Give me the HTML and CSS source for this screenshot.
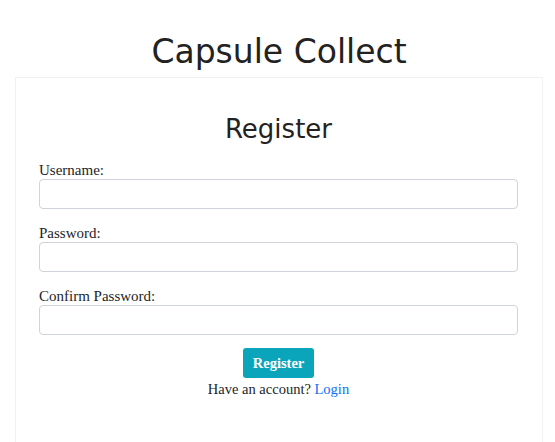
FILE: index.html
```html
<!DOCTYPE html>
<html>
<head>
<meta charset="utf-8">
<link rel="stylesheet" href="styles.css">
</head>
<body>
<div class="page">
  <h1 class="site-title">Capsule Collect</h1>
  <div class="card">
    <h2 class="card-title">Register</h2>
    <form class="form">
      <div class="field">
        <label class="label">Username:</label>
        <input class="input" type="text">
      </div>
      <div class="field">
        <label class="label">Password:</label>
        <input class="input" type="password">
      </div>
      <div class="field">
        <label class="label">Confirm Password:</label>
        <input class="input" type="password">
      </div>
      <div class="actions">
        <button class="btn" type="button">Register</button>
        <p class="switch">Have an account? <a class="link" href="#">Login</a></p>
      </div>
    </form>
  </div>
</div>
</body>
</html>
```
FILE: styles.css
```css
html, body {
  margin: 0;
  background: #ffffff;
}
body {
  font-family: "Liberation Serif", serif;
  color: #212529;
}
.page {
  padding: 0 12px 0 15px;
}
.site-title {
  font-family: "DejaVu Sans", sans-serif;
  font-weight: normal;
  font-size: 33px;
  line-height: 40px;
  text-align: center;
  margin: 32px 0 5px;
  color: #222;
}
.card {
  border: 1px solid #f1f1f1;
  padding: 33px 24px 40px 23px;
  min-height: 300px;
}
.card-title {
  font-family: "DejaVu Sans", sans-serif;
  font-weight: normal;
  font-size: 26px;
  line-height: 36px;
  text-align: center;
  margin: 0 0 14px;
  color: #222;
}
.form {
  display: flex;
  flex-direction: column;
  gap: 15px;
}
.field {
  display: flex;
  flex-direction: column;
}
.label {
  font-size: 15px;
  line-height: 18px;
}
.input {
  height: 30px;
  box-sizing: border-box;
  border: 1px solid #ced4da;
  border-radius: 4px;
  margin: 0;
  padding: 0 8px;
}
.actions {
  display: flex;
  flex-direction: column;
  align-items: center;
  margin-top: -2px;
}
.btn {
  background: #0aa5bb;
  color: #fff;
  border: none;
  border-radius: 3px;
  font-family: "Liberation Serif", serif;
  font-weight: bold;
  font-size: 14.5px;
  width: 71px;
  height: 30px;
  padding: 0;
}
.switch {
  margin: 2px 0 0;
  font-size: 14.5px;
  line-height: 18px;
}
.link {
  color: #0d6efd;
  text-decoration: none;
}
```
